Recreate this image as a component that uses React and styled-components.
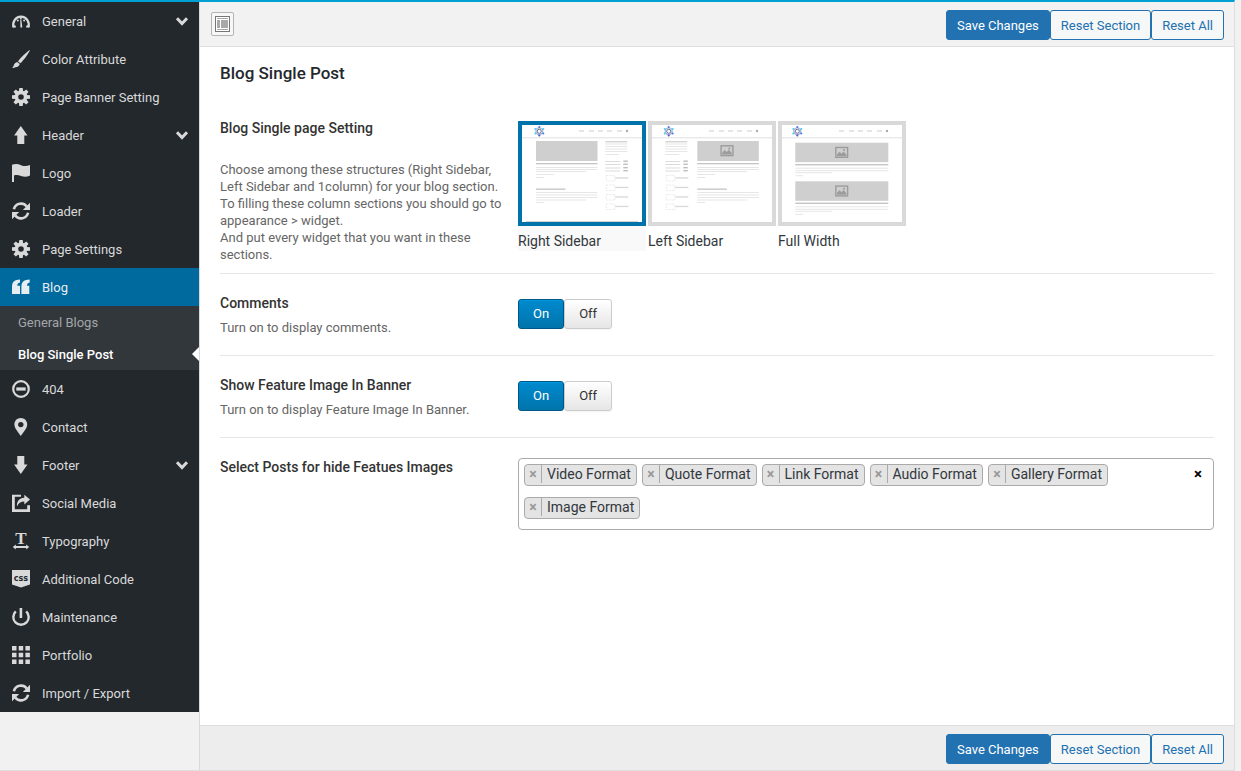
import { useState } from 'react';
import styled, { createGlobalStyle, css } from 'styled-components';

const GlobalStyle = createGlobalStyle`
  *, *::before, *::after {
    box-sizing: border-box;
  }

  body {
    margin: 0;
    background: #f1f1f1;
    color: #32373c;
    font-family: Roboto, 'Liberation Sans', sans-serif;
    font-size: 13px;
    line-height: 17px;
  }

  button, input {
    font-family: inherit;
  }

  h2, h3, p, ul {
    margin: 0;
    padding: 0;
    font-weight: 400;
  }

  ul {
    list-style: none;
  }
`;

const Panel = styled.div`
  display: flex;
  min-height: 100vh;
  margin-right: 6px;
  border-top: 2px solid #00a0d2;
  border-right: 1px solid #dedede;
  border-bottom: 1px solid #dedede;
`;

const Sidebar = styled.nav`
  flex: 0 0 199px;
`;

const Menu = styled.ul`
  background: #23282d;
`;

const MenuLink = styled.a`
  display: flex;
  align-items: center;
  gap: 12px;
  height: 38px;
  padding: 0 11px 0 12px;
  color: ${({ $active }) => ($active ? '#e6eef2' : '#d9d9d9')};
  background: ${({ $active }) => ($active ? '#006a9f' : 'transparent')};
  text-decoration: none;

  span {
    flex: 1;
  }
`;

const SubMenu = styled.ul`
  background: #32373c;
`;

const SubLink = styled.a`
  position: relative;
  display: flex;
  align-items: center;
  height: 32px;
  padding: 0 18px;
  color: #a3a6a9;
  text-decoration: none;

  ${({ $active }) =>
    $active &&
    css`
      color: #fff;
      font-weight: 500;

      &::after {
        content: '';
        position: absolute;
        right: 0;
        top: 9px;
        border: 7px solid transparent;
        border-left-width: 0;
        border-right-color: #fff;
      }
    `}
`;

const Icon = styled.svg`
  flex: none;
  width: 18px;
  height: 18px;
  overflow: visible;
  fill: currentColor;
`;

const Arrow = styled.svg`
  flex: none;
  width: 12px;
  height: 8px;
  overflow: visible;
  fill: none;
  stroke: currentColor;
  stroke-width: 3;
`;

const Main = styled.main`
  flex: 1;
  min-width: 0;
  display: flex;
  flex-direction: column;
  border-left: 1px solid #dadada;
  background: #fff;
`;

const Bar = styled.div`
  display: flex;
  align-items: flex-start;
  justify-content: flex-end;
  height: 45px;
  padding: 8px 10px 0 11px;
  background: ${({ $bottom }) => ($bottom ? '#ededed' : '#f2f2f2')};
  border: 0 solid #dedede;
  border-top-width: ${({ $bottom }) => ($bottom ? '1px' : '0')};
  border-bottom-width: ${({ $bottom }) => ($bottom ? '0' : '1px')};
`;

const ExpandButton = styled.button`
  display: flex;
  align-items: center;
  justify-content: center;
  width: 23px;
  height: 24px;
  margin: 2px auto 0 0;
  padding: 0;
  background: #f7f7f7;
  border: 1px solid #b4b4b4;
  border-radius: 2px;
`;

const ActionButton = styled.button`
  height: 30px;
  padding: 0 10px;
  font-size: 13px;
  color: ${({ $primary }) => ($primary ? '#fff' : '#2271b1')};
  background: ${({ $primary }) => ($primary ? '#2271b1' : '#f6f7f7')};
  border: 1px solid #2271b1;
  border-radius: 3px;
  cursor: pointer;
`;

const Content = styled.div`
  flex: 1;
  padding: 14px 20px;
`;

const Title = styled.h2`
  margin-bottom: 14px;
  color: #23282d;
  font-size: 17px;
  font-weight: 500;
  line-height: 24px;
`;

const Row = styled.section`
  display: grid;
  grid-template-columns: 298px 1fr;
  align-items: start;
  border-bottom: ${({ $last }) => ($last ? '0' : '1px solid #e7e7e7')};
`;

const LabelCell = styled.div`
  padding: 20px 10px 10px 0;
`;

const FieldTitle = styled.h3`
  color: #333;
  font-size: 14px;
  font-weight: 500;
  line-height: 18px;
`;

const Description = styled.p`
  margin-top: ${({ $spaced }) => ($spaced ? '24px' : '7px')};
  color: #666;
`;

const ControlCell = styled.div`
  padding: ${({ $pad }) => $pad};
`;

const HiddenRadio = styled.input`
  position: absolute;
  opacity: 0;
  margin: 0;
`;

const Layouts = styled.div`
  display: flex;
  flex-wrap: wrap;
  gap: 2px;
`;

const LayoutOption = styled.label`
  position: relative;
  display: flex;
  flex-direction: column;
  width: 128px;
  background: ${({ $selected }) => ($selected ? '#f9f9f9' : '#fff')};
  font-size: 14px;
  line-height: 18px;
  cursor: pointer;

  svg {
    height: 105px;
    border: 4px solid ${({ $selected }) => ($selected ? '#0073aa' : '#d9d9d9')};
    background: #fff;
  }

  span {
    padding: 6px 0 1px;
  }
`;

const Toggle = styled.div`
  position: relative;
  display: flex;
`;

const ToggleOption = styled.label`
  display: flex;
  align-items: center;
  justify-content: center;
  height: 30px;
  padding: 0 14px 1px;
  border: 1px solid #ccc;
  border-radius: 3px;
  background: linear-gradient(#fff, #e6e6e6);
  color: #333;
  box-shadow: 0 1px 2px rgba(0, 0, 0, 0.05);
  cursor: pointer;

  ${({ $on }) =>
    $on &&
    css`
      border-color: #005684;
      background: linear-gradient(#008ace, #0074ab);
      color: #fff;
      box-shadow: inset 0 1px 0 #0096dd;
    `}
`;

const TagBox = styled.div`
  display: flex;
  align-items: flex-start;
  min-height: 72px;
  padding: 5px 10px 10px 5px;
  border: 1px solid #aaa;
  border-radius: 4px;
`;

const TagList = styled.ul`
  flex: 1;
  display: flex;
  flex-wrap: wrap;
  gap: 11px 5px;
`;

const Tag = styled.li`
  display: flex;
  align-items: flex-start;
  height: 22px;
  background: #e4e4e4;
  border: 1px solid #aaa;
  border-radius: 4px;
  font-size: 14px;
  line-height: 19px;

  span {
    padding: 0 5px;
  }
`;

const TagRemove = styled.button`
  width: 17px;
  height: 18px;
  padding: 0;
  border: 0;
  border-right: 1px solid #aaa;
  background: none;
  color: #999;
  font-size: 14px;
  font-weight: 700;
  line-height: 16px;
`;

const SearchField = styled.input`
  width: 20px;
  height: 22px;
  padding: 0;
  border: 0;
  outline: 0;
  background: none;
`;

const ClearButton = styled.button`
  width: 10px;
  height: 20px;
  padding: 0;
  border: 0;
  background: none;
  color: #000;
  font-size: 15px;
  font-weight: 700;
  line-height: 20px;
`;

const gearTeeth = [0, 45, 90, 135, 180, 225, 270, 315];

const refreshIcon = (
  <>
    <path d="M1.900 7.200A7.300 7.300 0 0 1 14.800 4.500" fill="none" stroke="currentColor" strokeWidth="2.600" />
    <path d="M18 .8V8h-7.200z" />
    <path d="M16.100 10.800A7.300 7.300 0 0 1 3.200 13.500" fill="none" stroke="currentColor" strokeWidth="2.600" />
    <path d="M0 17.200V10h7.200z" />
  </>
);

const gearIcon = (
  <>
    <circle cx="9" cy="9" r="4.600" fill="none" stroke="currentColor" strokeWidth="3.600" />
    {gearTeeth.map((angle) => (
      <path key={angle} d="M7.300 0h3.400l.4 3.500H6.900z" transform={`rotate(${angle} 9 9)`} />
    ))}
  </>
);

const icons = {
  dashboard: (
    <>
      <path d="M1.900 15.300A7.700 7.700 0 1 1 16.100 15.300" fill="none" stroke="currentColor" strokeWidth="2.200" />
      <path d="M0 13.500h3.600l.4 2H.6zM14.400 13.500H18l-.6 2H14z" />
      <path d="M8.300 7.500h1l.9 6.500v1.500H8.400V14z" />
      <circle cx="5.800" cy="8.600" r="1" />
      <circle cx="8.900" cy="6.500" r=".9" />
      <circle cx="12.100" cy="8.600" r="1" />
    </>
  ),
  brush: (
    <>
      <path d="M18 0c-.5 1.800-5.600 9.600-9.600 13.200L6 11.400C8.600 7.400 16 .9 18 0z" />
      <path d="M5.200 12.100l2.600 1.900c-.6 1.600-1.600 2.700-3.200 3C3 17.300 1.800 18.300.2 18c1-.7 1.200-1.700 1.700-2.900.6-1.500 1.700-2.700 3.300-3z" />
    </>
  ),
  gear: gearIcon,
  up: <path d="M8.800 0l6.700 9.500h-3.200V18H5.300V9.500H2.100z" />,
  flag: (
    <path d="M0 .8C3.500-.4 6.500.1 9 1.200c3 1.200 6 1.100 9-.2v10.600c-3 1.500-6 1.600-9 .4-2.300-1-4.700-1.300-7-.6V18H0z" />
  ),
  refresh: refreshIcon,
  quote: (
    <>
      <path d="M8 1.500v2.900c-1.900.3-2.700 1.500-2.700 3.300H8V16H0V8.500C0 4 2.800 1.600 8 1.500z" />
      <path d="M17.700 1.500v2.900c-1.900.3-2.700 1.500-2.700 3.300h2.300V16H9.400V8.500c0-4.500 2.900-6.900 8.300-7z" />
    </>
  ),
  minus: (
    <>
      <circle cx="9" cy="9" r="7.800" fill="none" stroke="currentColor" strokeWidth="2.200" />
      <path d="M4.300 7.400h9.400v3.200H4.300z" />
    </>
  ),
  pin: (
    <path
      fillRule="evenodd"
      d="M8.800 0c3.600 0 6.400 2.800 6.400 6.400 0 3.800-3.600 7-6.400 11.600C6 13.400 2.400 10.200 2.400 6.400 2.400 2.800 5.200 0 8.800 0zm0 3.900a2.700 2.700 0 1 0 0 5.400 2.700 2.700 0 0 0 0-5.400z"
    />
  ),
  down: <path d="M8.800 18l6.700-9.500h-3.200V0H5.300v8.500H2.100z" />,
  share: (
    <>
      <path d="M0 .8h9v2H2.800v12.400h12.400v-4H18V18H0z" />
      <path d="M12.300.8L18 5.600l-5.700 4.800V7.500c-3.500 0-5.900 1.500-7.300 4.900C4.500 7.200 7.400 3.800 12.300 3.700z" />
    </>
  ),
  type: (
    <>
      <text x="9" y="12" textAnchor="middle" fontFamily="Liberation Serif" fontWeight="700" fontSize="17">
        T
      </text>
      <path d="M.8 15l3-2.500v1.600h10.400v-1.600l3 2.500-3 2.500v-1.600H3.800v1.600z" />
    </>
  ),
  css: (
    <>
      <path d="M0 0h18v14.500L9 17.500l-9-3z" />
      <text x="9" y="11" textAnchor="middle" fontFamily="DejaVu Sans" fontWeight="700" fontSize="8" fill="#23282d">
        css
      </text>
    </>
  ),
  power: (
    <>
      <path d="M3.800 3.400a7.700 7.700 0 1 0 10.400 0" fill="none" stroke="currentColor" strokeWidth="2.400" />
      <path d="M7.600 0h2.600v10H7.600z" />
    </>
  ),
  grid: (
    <path d="M0 0h4.500v4.500H0zM6.700 0h4.500v4.500H6.700zM13.400 0h4.500v4.500h-4.500zM0 6.700h4.500v4.500H0zM6.700 6.700h4.500v4.500H6.700zM13.400 6.700h4.500v4.500h-4.500zM0 13.400h4.500v4.500H0zM6.700 13.400h4.500v4.500H6.700zM13.400 13.400h4.500v4.500h-4.500z" />
  ),
};

const menuItems = [
  { label: 'General', icon: 'dashboard', expandable: true },
  { label: 'Color Attribute', icon: 'brush' },
  { label: 'Page Banner Setting', icon: 'gear' },
  { label: 'Header', icon: 'up', expandable: true },
  { label: 'Logo', icon: 'flag' },
  { label: 'Loader', icon: 'refresh' },
  { label: 'Page Settings', icon: 'gear' },
  { label: 'Blog', icon: 'quote', active: true, children: ['General Blogs', 'Blog Single Post'] },
  { label: '404', icon: 'minus' },
  { label: 'Contact', icon: 'pin' },
  { label: 'Footer', icon: 'down', expandable: true },
  { label: 'Social Media', icon: 'share' },
  { label: 'Typography', icon: 'type' },
  { label: 'Additional Code', icon: 'css' },
  { label: 'Maintenance', icon: 'power' },
  { label: 'Portfolio', icon: 'grid' },
  { label: 'Import / Export', icon: 'refresh' },
];

const Line = ({ x, y, w, h = 1, fill = '#e6e6e6' }) => <rect x={x} y={y} width={w} height={h} fill={fill} />;

const PreviewHeader = ({ x }) => (
  <>
    <g transform={`translate(${x} 6.300)`} fill="none">
      <path d="M0-3.800L3.300-1.900V1.900L0 3.800-3.300 1.900V-1.900z" stroke="#a9b8d8" strokeWidth="1.400" />
      <circle r="2" stroke="#55618f" strokeWidth=".9" />
      <g fill="#4a7cf0">
        <circle cy="-4.300" r="1" />
        <circle cx="4" cy="2.300" r="1" />
        <circle cx="-4" cy="-2.300" r="1" fill="#4ccdf0" />
        <circle cx="4" cy="-2.300" r="1" fill="#4ccdf0" />
        <circle cx="-4" cy="2.300" r="1" fill="#4ccdf0" />
        <circle cy="4.300" r="1" fill="#5b4bd0" />
      </g>
    </g>
    {[57, 67, 76, 85, 95].map((left) => (
      <Line key={left} x={left} y={5.5} w={5} fill="#cdcdcd" />
    ))}
    <circle cx="105" cy="6" r="1.200" fill="#aaa" />
    <Line x={0} y={12} w={120} fill="#e9e9e9" />
    <Line x={0} y={13} w={120} fill="#f6f6f6" />
  </>
);

const PreviewPicture = ({ x, y }) => (
  <g transform={`translate(${x} ${y})`}>
    <rect x=".8" y=".8" width="11.800" height="9.800" fill="none" stroke="#9c9c9c" strokeWidth="1.400" />
    <path d="M2 9.500V7.500L4.500 5l2 2 2-2.300 2.800 3v1.800z" fill="#9c9c9c" />
    <circle cx="9" cy="3.400" r="1" fill="#9c9c9c" />
  </g>
);

const PreviewArticle = ({ x, picture }) => (
  <>
    <Line x={x} y={16} w={61.5} h={20} fill="#cfcfcf" />
    {picture && <PreviewPicture x={x + 23} y={20} />}
    <Line x={x} y={38} w={61.5} h={1.3} fill="#c4c4c4" />
    <Line x={x} y={42} w={61.5} />
    <Line x={x} y={44} w={61.5} />
    <Line x={x} y={46} w={50} />
    <Line x={x} y={49} w={18} />
    <Line x={x} y={52} w={8} />
    <Line x={x} y={63.5} w={29.5} h={1.3} fill="#c4c4c4" />
    <Line x={x} y={67} w={61.5} />
    <Line x={x} y={69.5} w={61.5} />
    <Line x={x} y={72} w={61.5} />
    <Line x={x} y={74.5} w={50} />
    <Line x={x} y={77} w={8} />
  </>
);

const PreviewWidgets = ({ x }) => (
  <>
    <Line x={x} y={16.3} w={22} fill="#c4c4c4" />
    {[18.5, 21, 23.5, 26].map((y) => (
      <Line key={y} x={x} y={y} w={22} />
    ))}
    <Line x={x} y={29} w={14} />
    {[36, 39, 42.500, 45.500].map((y) => (
      <g key={y}>
        <Line x={x} y={y} w={15} fill="#dcdcdc" />
        <Line x={x + 18} y={y - 0.5} w={4.5} h={1.4} fill="#bdbdbd" />
      </g>
    ))}
    {[50.5, 60, 69.5, 79].map((y) => (
      <g key={y}>
        <rect x={x + 1} y={y} width="8.500" height="5.500" fill="none" stroke="#e6e6e6" strokeWidth=".8" strokeDasharray="2 1" />
        <Line x={x + 10} y={y + 1.8} w={13} h={1.3} fill="#d8d8d8" />
      </g>
    ))}
  </>
);

const PreviewPost = ({ y }) => (
  <>
    <Line x={13.3} y={y} w={93} h={19.5} fill="#cfcfcf" />
    <PreviewPicture x={53} y={y + 4} />
    <Line x={13.3} y={y + 21.3} w={93} h={1.4} fill="#c4c4c4" />
    <Line x={13.3} y={y + 25} w={93} />
    <Line x={13.3} y={y + 27.5} w={93} />
    <Line x={13.3} y={y + 29.5} w={37} />
    <Line x={13.3} y={y + 32.5} w={8} />
  </>
);

const layouts = [
  {
    label: 'Right Sidebar',
    preview: (
      <>
        <PreviewHeader x={17.3} />
        <PreviewArticle x={14} />
        <PreviewWidgets x={83.3} />
        <Line x={4} y={96} w={112} fill="#d2d2d2" />
      </>
    ),
  },
  {
    label: 'Left Sidebar',
    preview: (
      <>
        <PreviewHeader x={16.7} />
        <PreviewArticle x={45.3} picture />
        <PreviewWidgets x={13.3} />
      </>
    ),
  },
  {
    label: 'Full Width',
    preview: (
      <>
        <PreviewHeader x={15.3} />
        <PreviewPost y={17.7} />
        <PreviewPost y={56.3} />
      </>
    ),
  },
];

const formats = ['Video Format', 'Quote Format', 'Link Format', 'Audio Format', 'Gallery Format', 'Image Format'];

const SideMenu = () => (
  <Sidebar>
    <Menu>
      {menuItems.map(({ label, icon, expandable, active, children }) => (
        <li key={label}>
          <MenuLink href="#" $active={active}>
            <Icon viewBox="0 0 18 18">{icons[icon]}</Icon>
            <span>{label}</span>
            {expandable && (
              <Arrow viewBox="0 0 12 8">
                <path d="M1 1.300l5 5.200 5-5.200" />
              </Arrow>
            )}
          </MenuLink>
          {children && (
            <SubMenu>
              {children.map((child) => (
                <li key={child}>
                  <SubLink href="#" $active={child === 'Blog Single Post'}>
                    {child}
                  </SubLink>
                </li>
              ))}
            </SubMenu>
          )}
        </li>
      ))}
    </Menu>
  </Sidebar>
);

const Actions = () => (
  <>
    <ActionButton $primary>Save Changes</ActionButton>
    <ActionButton>Reset Section</ActionButton>
    <ActionButton>Reset All</ActionButton>
  </>
);

const Switch = ({ name, label }) => {
  const [value, setValue] = useState('On');

  return (
    <Toggle role="radiogroup" aria-label={label}>
      {['On', 'Off'].map((option) => (
        <ToggleOption key={option} $on={value === option}>
          <HiddenRadio type="radio" name={name} checked={value === option} onChange={() => setValue(option)} />
          {option}
        </ToggleOption>
      ))}
    </Toggle>
  );
};

const LayoutPicker = () => {
  const [selected, setSelected] = useState('Right Sidebar');

  return (
    <Layouts role="radiogroup" aria-label="Blog Single page Setting">
      {layouts.map(({ label, preview }) => (
        <LayoutOption key={label} $selected={selected === label}>
          <HiddenRadio type="radio" name="layout" checked={selected === label} onChange={() => setSelected(label)} />
          <svg viewBox="0 0 120 97">{preview}</svg>
          <span>{label}</span>
        </LayoutOption>
      ))}
    </Layouts>
  );
};

const FormatSelect = () => {
  const [tags, setTags] = useState(formats);

  return (
    <TagBox>
      <TagList>
        {tags.map((tag) => (
          <Tag key={tag}>
            <TagRemove aria-label={`Remove ${tag}`} onClick={() => setTags(tags.filter((t) => t !== tag))}>
              ×
            </TagRemove>
            <span>{tag}</span>
          </Tag>
        ))}
        <li>
          <SearchField id="hide-formats" type="text" />
        </li>
      </TagList>
      <ClearButton aria-label="Remove all" onClick={() => setTags([])}>
        ×
      </ClearButton>
    </TagBox>
  );
};

const App = () => (
  <>
    <GlobalStyle />
    <Panel>
      <SideMenu />
      <Main>
        <Bar>
          <ExpandButton aria-label="Expand options">
            <svg width="17" height="18" viewBox="0 0 17 18">
              <rect x="1.500" y="1.500" width="14" height="15" fill="#fff" stroke="#777" />
              <path d="M3 3.500h11M3 14.500h11" stroke="#aaa" />
              <path d="M3 5h3v8H3zM7 5h7v8H7z" fill="#aaa" />
            </svg>
          </ExpandButton>
          <Actions />
        </Bar>
        <Content>
          <Title>Blog Single Post</Title>
          <Row>
            <LabelCell>
              <FieldTitle>Blog Single page Setting</FieldTitle>
              <Description $spaced>
                Choose among these structures (Right Sidebar, Left Sidebar and 1column) for your blog section.
                <br />
                To filling these column sections you should go to appearance &gt; widget.
                <br />
                And put every widget that you want in these sections.
              </Description>
            </LabelCell>
            <ControlCell $pad="22px 0">
              <LayoutPicker />
            </ControlCell>
          </Row>
          <Row>
            <LabelCell>
              <FieldTitle>Comments</FieldTitle>
              <Description>Turn on to display comments.</Description>
            </LabelCell>
            <ControlCell $pad="25px 0 26px">
              <Switch name="comments" label="Comments" />
            </ControlCell>
          </Row>
          <Row>
            <LabelCell>
              <FieldTitle>Show Feature Image In Banner</FieldTitle>
              <Description>Turn on to display Feature Image In Banner.</Description>
            </LabelCell>
            <ControlCell $pad="25px 0 26px">
              <Switch name="banner" label="Show Feature Image In Banner" />
            </ControlCell>
          </Row>
          <Row $last>
            <LabelCell>
              <FieldTitle>
                <label htmlFor="hide-formats">Select Posts for hide Featues Images</label>
              </FieldTitle>
            </LabelCell>
            <ControlCell $pad="20px 0">
              <FormatSelect />
            </ControlCell>
          </Row>
        </Content>
        <Bar $bottom>
          <Actions />
        </Bar>
      </Main>
    </Panel>
  </>
);

export default App;
